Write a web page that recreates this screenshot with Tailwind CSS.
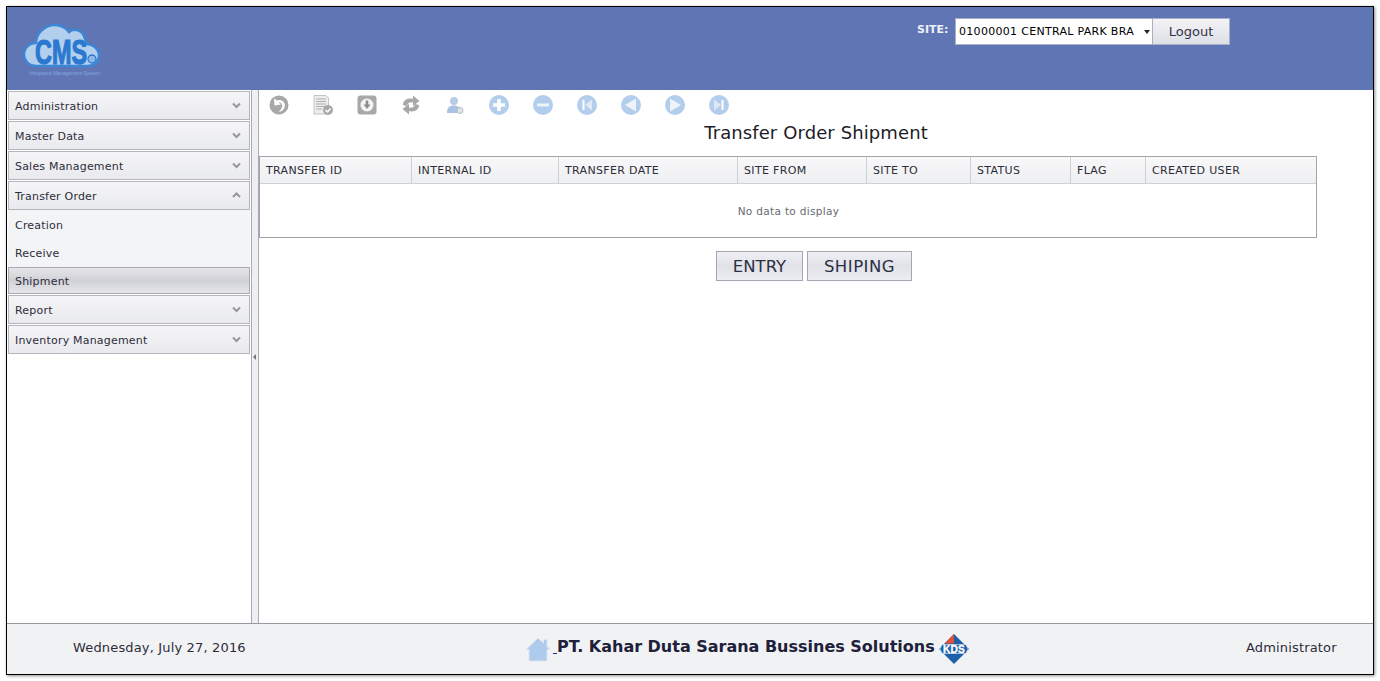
<!DOCTYPE html>
<html lang="en">
<head>
    <meta charset="UTF-8">
    <title>Transfer Order Shipment</title>
    <script src="https://cdn.jsdelivr.net/npm/@tailwindcss/browser@4"></script>
</head>
<body class="bg-white h-[681px] overflow-hidden font-['DejaVu_Sans',sans-serif] text-[#2d2d3a]">
    <div class="ml-[6px] mt-[6px] w-[1368px] h-[669px] border border-black shadow-[1px_1px_3px_rgba(0,0,0,0.45)] flex flex-col">
        <!-- header -->
        <header class="h-[83px] shrink-0 bg-[#5f75b4] flex relative">
            <div class="ml-[16px] mt-[16px] w-[80px]">
                <svg class="overflow-visible" width="80" height="50" viewBox="0 0 80 50">
                    <path d="M14 43 C5 43 1 37 1 32 C1 25 6 20 13 20 C13 10 22 2 32 2 C38 2 43 5 46 9 C50 5 60 6 62 16 C63 18 63 19 63 21 C70 21 76 26 76 33 C76 39 71 43 65 43 Z" fill="#b3cfee" stroke="#3d86d6" stroke-width="2.5"/>
                    <text x="38" y="41" text-anchor="middle" font-family="Liberation Sans" font-weight="700" font-size="35" fill="#2a78cf" stroke="#2a78cf" stroke-width="1.2" textLength="52" lengthAdjust="spacingAndGlyphs">CMS</text>
                    <circle cx="69" cy="36" r="4" fill="#8fb6e4" stroke="#2a78cf" stroke-width="1.3"/>
                </svg>
                <p class="text-[5px] leading-none text-[#86a8e0] -mt-[2px] ml-[6px] whitespace-nowrap font-['Liberation_Sans',sans-serif]">Integrated Management System</p>
            </div>
            <span class="absolute left-[910px] top-[16px] text-[11px] font-bold leading-[13px] text-[#eef1fa]">SITE:</span>
            <div class="absolute left-[948px] top-[11px] flex">
                <div class="w-[198px] h-[27px] bg-white border border-[#a9afc4] flex items-center pl-[3px] pt-[2px] text-[11px] tracking-[0.3px] text-black relative">
                    <span class="whitespace-nowrap">01000001 CENTRAL PARK BRA</span>
                    <span class="absolute right-[2px] top-[11px] w-0 h-0 border-x-[3.5px] border-x-transparent border-t-[4px] border-t-[#222]"></span>
                </div>
                <button class="w-[78px] h-[27px] -ml-px border border-[#a9afc4] bg-gradient-to-b from-[#f3f3f6] to-[#dfe0e7] text-[13px] text-[#33334a]">Logout</button>
            </div>
        </header>

        <div class="flex-1 flex min-h-0">
            <!-- sidebar -->
            <aside class="w-[244px] shrink-0 bg-white pt-[1px] px-[1px]">
                <div class="flex flex-col gap-[1px] text-[11px] tracking-[0.2px]">
                    <div class="h-[29px] pt-[4px] border border-[#b5b6bc] bg-gradient-to-b from-[#f5f5f7] to-[#e9eaee] flex items-center justify-between pl-[6px] pr-[8px]">Administration
                        <svg class="-mt-[4px]" width="9" height="7" viewBox="0 0 9 7"><path d="M1 1.5 L4.5 5 L8 1.5" fill="none" stroke="#97979b" stroke-width="2"/></svg></div>
                    <div class="h-[29px] pt-[4px] border border-[#b5b6bc] bg-gradient-to-b from-[#f5f5f7] to-[#e9eaee] flex items-center justify-between pl-[6px] pr-[8px]">Master Data
                        <svg class="-mt-[4px]" width="9" height="7" viewBox="0 0 9 7"><path d="M1 1.5 L4.5 5 L8 1.5" fill="none" stroke="#97979b" stroke-width="2"/></svg></div>
                    <div class="h-[29px] pt-[4px] border border-[#b5b6bc] bg-gradient-to-b from-[#f5f5f7] to-[#e9eaee] flex items-center justify-between pl-[6px] pr-[8px]">Sales Management
                        <svg class="-mt-[4px]" width="9" height="7" viewBox="0 0 9 7"><path d="M1 1.5 L4.5 5 L8 1.5" fill="none" stroke="#97979b" stroke-width="2"/></svg></div>
                    <div>
                        <div class="h-[29px] pt-[4px] border border-[#b5b6bc] bg-gradient-to-b from-[#f5f5f7] to-[#e9eaee] flex items-center justify-between pl-[6px] pr-[8px]">Transfer Order
                            <svg class="-mt-[4px]" width="9" height="7" viewBox="0 0 9 7"><path d="M1 5 L4.5 1.5 L8 5" fill="none" stroke="#97979b" stroke-width="2"/></svg></div>
                        <div class="bg-[#f3f4f6] pt-[1px]">
                            <div class="h-[28px] pt-[2px] flex items-center pl-[7px]">Creation</div>
                            <div class="h-[28px] pt-[2px] flex items-center pl-[7px]">Receive</div>
                            <div class="h-[27px] pt-[4px] border border-[#a9aab0] bg-gradient-to-b from-[#e6e6ea] via-[#d0d1d6] to-[#e6e6ea] flex items-center pl-[6px]">Shipment</div>
                        </div>
                    </div>
                    <div class="h-[29px] pt-[4px] border border-[#b5b6bc] bg-gradient-to-b from-[#f5f5f7] to-[#e9eaee] flex items-center justify-between pl-[6px] pr-[8px]">Report
                        <svg class="-mt-[4px]" width="9" height="7" viewBox="0 0 9 7"><path d="M1 1.5 L4.5 5 L8 1.5" fill="none" stroke="#97979b" stroke-width="2"/></svg></div>
                    <div class="h-[29px] pt-[4px] border border-[#b5b6bc] bg-gradient-to-b from-[#f5f5f7] to-[#e9eaee] flex items-center justify-between pl-[6px] pr-[8px]">Inventory Management
                        <svg class="-mt-[4px]" width="9" height="7" viewBox="0 0 9 7"><path d="M1 1.5 L4.5 5 L8 1.5" fill="none" stroke="#97979b" stroke-width="2"/></svg></div>
                </div>
            </aside>

            <!-- splitter -->
            <div class="w-[8px] shrink-0 bg-[#eeeff2] border-x border-[#a9aab2] flex items-center">
                <span class="w-0 h-0 ml-[1px] border-y-[3px] border-y-transparent border-r-[3px] border-r-[#777]"></span>
            </div>

            <!-- content -->
            <main class="flex-1 min-w-0 bg-white">
                <div class="h-[28px] flex items-center pl-[10px] gap-[24px] pt-[2px]">
                    <svg class="w-[20px] h-[20px]" viewBox="0 0 20 20"><circle cx="10" cy="10" r="9.5" fill="#a8a8a8"/><path d="M5 3.5 L5.5 10.5 L12 9.5 L9.5 7.5 C12 7 14.5 10 12.5 13 C12 14.5 11 16 9.5 17 C14 16.5 17 12.5 15.5 8.5 C14.5 5.5 11 4 8 5.5 Z" fill="#fff"/></svg>
                    <svg class="w-[20px] h-[20px]" viewBox="0 0 20 20"><path d="M1 0.5 H13 L15.5 3 V19 H1 Z" fill="#ececec" stroke="#c4c4c4"/><path d="M3 4 H13 M3 6.5 H13 M3 9 H13 M3 11.5 H13 M3 14 H9" stroke="#b0b0b0" stroke-width="1"/><circle cx="15" cy="15" r="5" fill="#a8a8a8"/><path d="M12.5 15 L14.5 17 L17.5 13.5" fill="none" stroke="#fff" stroke-width="1.5"/></svg>
                    <svg class="w-[20px] h-[20px]" viewBox="0 0 20 20"><rect x="0.5" y="0.5" width="19" height="19" rx="3" fill="#a8a8a8"/><circle cx="10" cy="10" r="6.5" fill="#f4f4f4"/><path d="M8.7 5.5 H11.3 V9.5 H13.5 L10 14 L6.5 9.5 H8.7 Z" fill="#8d8d8d"/></svg>
                    <svg class="w-[20px] h-[20px]" viewBox="0 0 20 20"><path d="M2 10 C2 5 7 2.5 12 4 L12 0.5 L18.5 6 L12 11 L12 7.5 C9 6.5 6.5 8 6 11 Z" fill="#a8a8a8"/><path d="M18 10 C18 15 13 17.5 8 16 L8 19.5 L1.5 14 L8 9 L8 12.5 C11 13.5 13.5 12 14 9 Z" fill="#a8a8a8"/></svg>
                    <svg class="w-[20px] h-[20px]" viewBox="0 0 20 20"><circle cx="9" cy="6" r="4" fill="#b9cce6"/><path d="M2 18 C2 12 5 10.5 9 10.5 C13 10.5 16 13 16 18 Z" fill="#a9c2e2"/><circle cx="15" cy="15.5" r="3" fill="#dfe3ea" stroke="#b8bcc4"/></svg>
                    <svg class="w-[20px] h-[20px]" viewBox="0 0 20 20"><circle cx="10" cy="10" r="10" fill="#b3cdec"/><path d="M8.2 4 H11.8 V8.2 H16 V11.8 H11.8 V16 H8.2 V11.8 H4 V8.2 H8.2 Z" fill="#fff"/></svg>
                    <svg class="w-[20px] h-[20px]" viewBox="0 0 20 20"><circle cx="10" cy="10" r="10" fill="#b3cdec"/><rect x="4" y="8.5" width="12" height="3" fill="#eef3fa"/></svg>
                    <svg class="w-[20px] h-[20px]" viewBox="0 0 20 20"><circle cx="10" cy="10" r="10" fill="#b3cdec"/><rect x="5.5" y="5" width="2" height="10" fill="#fff"/><path d="M15 4.5 V15.5 L8 10 Z" fill="#dfe9f6"/></svg>
                    <svg class="w-[20px] h-[20px]" viewBox="0 0 20 20"><circle cx="10" cy="10" r="10" fill="#b3cdec"/><path d="M15 3.5 V16.5 L4 10 Z" fill="#eef3fa"/></svg>
                    <svg class="w-[20px] h-[20px]" viewBox="0 0 20 20"><circle cx="10" cy="10" r="10" fill="#b3cdec"/><path d="M5 3.5 V16.5 L16 10 Z" fill="#eef3fa"/></svg>
                    <svg class="w-[20px] h-[20px]" viewBox="0 0 20 20"><circle cx="10" cy="10" r="10" fill="#b3cdec"/><rect x="12.5" y="5" width="2" height="10" fill="#fff"/><path d="M5 4.5 V15.5 L12 10 Z" fill="#dfe9f6"/></svg>
                </div>
                <h1 class="text-[18px] leading-[24px] tracking-[0.1px] text-center w-[1114px] mt-[3px] text-[#1c1c28]">Transfer Order Shipment</h1>

                <div class="mt-[11px] w-[1058px] border border-[#a3a3ad] text-[11px] tracking-[0.33px]">
                    <div class="h-[27px] flex bg-gradient-to-b from-[#f8f8f9] to-[#eeeff1] border-b border-[#cfd0d6] items-center">
                        <div class="w-[152px] pl-[6px] pt-[2px] h-full flex items-center border-r border-[#cfd0d6]">TRANSFER ID</div>
                        <div class="w-[147px] pl-[6px] pt-[2px] h-full flex items-center border-r border-[#cfd0d6]">INTERNAL ID</div>
                        <div class="w-[179px] pl-[6px] pt-[2px] h-full flex items-center border-r border-[#cfd0d6]">TRANSFER DATE</div>
                        <div class="w-[129px] pl-[6px] pt-[2px] h-full flex items-center border-r border-[#cfd0d6]">SITE FROM</div>
                        <div class="w-[104px] pl-[6px] pt-[2px] h-full flex items-center border-r border-[#cfd0d6]">SITE TO</div>
                        <div class="w-[100px] pl-[6px] pt-[2px] h-full flex items-center border-r border-[#cfd0d6]">STATUS</div>
                        <div class="w-[75px] pl-[6px] pt-[2px] h-full flex items-center border-r border-[#cfd0d6]">FLAG</div>
                        <div class="flex-1 pl-[6px] pt-[2px] h-full flex items-center">CREATED USER</div>
                    </div>
                    <div class="h-[53px] flex items-center justify-center pt-[2px] pl-[1px] text-[10.5px] text-[#666a70]">No data to display</div>
                </div>

                <div class="mt-[13px] flex justify-center gap-[4px] w-[1110px]">
                    <button class="w-[87px] h-[30px] pt-[2px] border border-[#a5a6b2] bg-gradient-to-b from-[#eff0f4] via-[#e0e2e8] to-[#eceef2] text-[16.5px] text-[#2c2f44]">ENTRY</button>
                    <button class="w-[105px] h-[30px] pt-[2px] border border-[#a5a6b2] bg-gradient-to-b from-[#eff0f4] via-[#e0e2e8] to-[#eceef2] text-[16.5px] tracking-[0.5px] text-[#2c2f44]">SHIPING</button>
                </div>
            </main>
        </div>

        <!-- footer -->
        <footer class="h-[51px] shrink-0 bg-[#f1f2f4] border-t border-[#98989e] relative text-[13px] tracking-[0.16px]">
            <span class="absolute left-[66px] top-[15px] leading-[18px]">Wednesday, July 27, 2016</span>
            <div class="absolute left-[518px] top-[13px] flex items-start">
                <svg class="w-[26px] h-[26px]" viewBox="0 0 26 26"><path d="M13 1 L18.5 6 V2.5 H22 V9.5 L25 12.5 H22 V24 H4 V12.5 H1 Z" fill="#aecbee" stroke="#e4e7ec" stroke-width="0.8"/></svg>
                <span class="block w-[4px] h-[1px] bg-[#33338a] mt-[16px] ml-[2px]"></span>
                <span class="text-[16px] font-bold leading-[20px] tracking-[-0.01px] whitespace-nowrap text-[#20203a]">PT. Kahar Duta Sarana Bussines Solutions</span>
                <svg class="w-[30px] h-[30px] ml-[4px] -mt-[3px]" viewBox="0 0 30 30">
                    <path d="M15 0 L30 15 L15 30 L0 15 Z" fill="#1d5fa8"/><path d="M15 0 L5.5 9.5 H15 Z" fill="#e2503a"/>
                    <path d="M3 10.5 H27 L29 15 L27 19.5 H3 L1 15 Z" fill="#1d5fa8" stroke="#fff" stroke-width="0.6"/>
                    <text x="15" y="18.7" text-anchor="middle" font-size="10" font-weight="700" fill="#fff" stroke="#fff" stroke-width="0.3" font-family="Liberation Sans" textLength="22" lengthAdjust="spacingAndGlyphs">KDS</text>
                </svg>
            </div>
            <span class="absolute left-[1239px] top-[15px] leading-[18px]">Administrator</span>
        </footer>
    </div>
</body>
</html>
